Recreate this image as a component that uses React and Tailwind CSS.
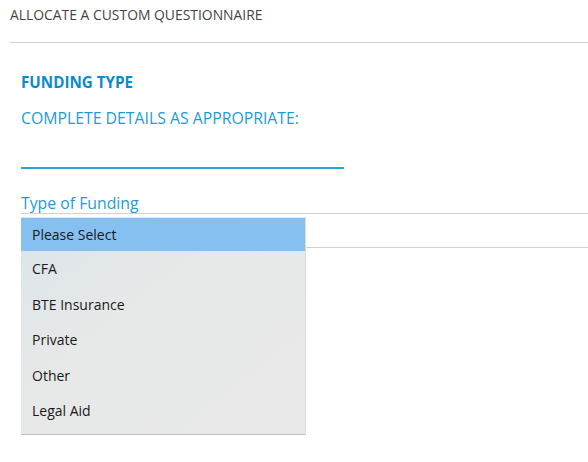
export default function App() {
  const items = ["CFA", "BTE Insurance", "Private", "Other", "Legal Aid"];
  return (
    <div className="w-[588px] h-[462px] bg-white overflow-hidden" style={{ fontFamily: '"Open Sans", "Noto Sans", sans-serif' }}>
      <div className="ml-[10px] h-[43px] border-b border-[#d0d0d0] pt-[6px]">
        <div className="text-[13.9px] leading-[18px] text-[#444]">ALLOCATE A CUSTOM QUESTIONNAIRE</div>
      </div>
      <div className="pl-[21px]">
        <div className="mt-[29px] h-[20px] text-[15.2px] leading-[20px] font-bold text-[#0a8bcb]">FUNDING TYPE</div>
        <div className="mt-[15px] h-[22px] text-[15.8px] leading-[22px] text-[#1b9bd7]">COMPLETE DETAILS AS APPROPRIATE:</div>
        <div className="mt-[38px] w-[323px] h-[2px] bg-[#29a3dc]"></div>
        <div className="mt-[24px] h-[20px] text-[15.8px] leading-[20px] text-[#1b9bd7]">Type of Funding</div>
        <div className="relative h-[35px] border-y border-[#d0d0d0]">
          <div className="absolute left-0 top-[3px] w-[285px] h-[218px] pt-[1px] bg-gradient-to-br from-[#dae5ea] via-[#e7e8e8] via-40% to-[#e9e9e9] border-b border-[#bdbdbd] border-r border-r-[#dcdcdc] text-[14px] text-[#1a1a1a]">
            <div className="h-[33px] bg-[#85c0f0] flex items-center pl-[11px]">Please Select</div>
            {items.map((t) => (
              <div key={t} className="h-[35.5px] flex items-center pl-[11px]">{t}</div>
            ))}
          </div>
        </div>
      </div>
    </div>
  );
}
